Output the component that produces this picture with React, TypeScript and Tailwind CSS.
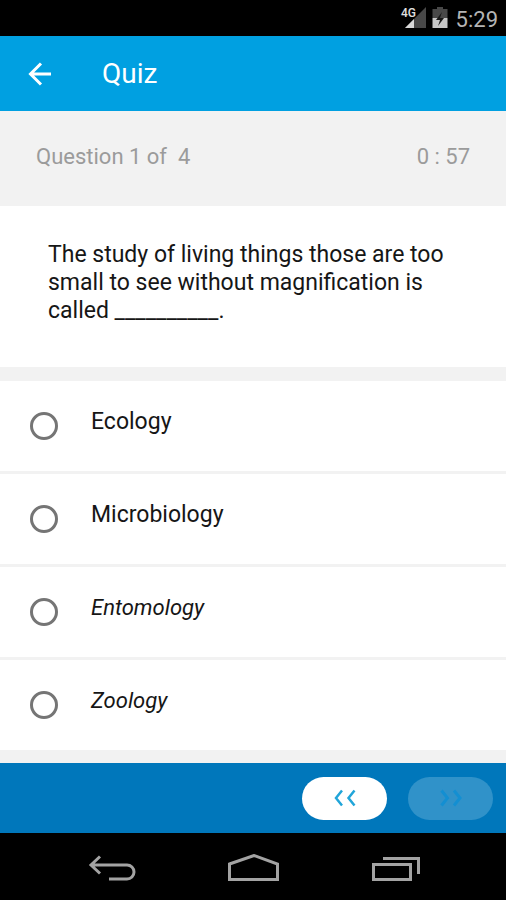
import clsx from 'clsx';
import * as React from 'react';

interface IOption {
  id: string;
  label: string;
  italic?: boolean;
}

const options: IOption[] = [
  { id: 'ecology', label: 'Ecology' },
  { id: 'microbiology', label: 'Microbiology' },
  { id: 'entomology', label: 'Entomology', italic: true },
  { id: 'zoology', label: 'Zoology', italic: true },
];

const StatusBar: React.FunctionComponent = () => (
  <div className="flex h-9 items-center justify-end bg-black pr-2 text-[#b4b4b4]">
    <svg width="26" height="24" viewBox="0 0 26 24" className="mr-1.5" aria-hidden="true">
      <path d="M26 1v21H5z" fill="#484848" />
      <path d="M14 13v9H5z" fill="#d8d8d8" />
      <text x="1" y="11" fontSize="12" fontWeight="500" fill="#e0e0e0" className="font-['Roboto',sans-serif]">
        4G
      </text>
    </svg>
    <svg width="16" height="24" viewBox="0 0 16 24" className="mr-2" aria-hidden="true">
      <path d="M5 1h6v2h4.500v9H.5V3H5z" fill="#484848" />
      <path d="M.5 12h15v10H.5z" fill="#c6c6c6" />
      <path d="M10 6 4 14h4l-2 6 6-8H8z" fill="#181818" />
    </svg>
    <span className="pt-1 text-[22px] leading-6">5:29</span>
  </div>
);

const AppBar: React.FunctionComponent = () => (
  <header className="flex h-[75px] items-center bg-[#00a0e1] pl-7 text-white">
    <button type="button" aria-label="Back" className="mr-[50px]">
      <svg width="24" height="24" viewBox="0 0 24 24" fill="none" stroke="currentColor" strokeWidth="3">
        <path d="M23 12H3M13 1.500 2.500 12 13 22.500" />
      </svg>
    </button>
    <h1 className="text-[28px] leading-8">Quiz</h1>
  </header>
);

const Option: React.FunctionComponent<IOption> = ({ id, label, italic }) => (
  <label htmlFor={id} className="flex h-[90px] items-start bg-white pl-[30px]">
    <input
      id={id}
      type="radio"
      name="answer"
      className="mt-[31px] mr-[33px] size-7 shrink-0 appearance-none rounded-full border-3 border-[#757575] checked:bg-[#00a0e1]"
    />
    <span className={clsx('mt-[27px] leading-7', italic ? 'text-[22px] italic' : 'text-[23px]')}>{label}</span>
  </label>
);

const Footer: React.FunctionComponent = () => (
  <footer className="flex h-[70px] items-center justify-end gap-[21px] bg-[#0077bb] pr-[13px] text-[#21a5d9]">
    <button
      type="button"
      aria-label="Previous question"
      className="flex h-[43px] w-[85px] items-center justify-center rounded-full bg-white"
    >
      <svg width="22" height="18" viewBox="0 0 22 18" fill="none" stroke="currentColor" strokeWidth="2.500">
        <path d="M8 1.500 2 9l6 7.500M20.500 1.500l-6 7.500 6 7.500" />
      </svg>
    </button>
    <button
      type="button"
      aria-label="Next question"
      disabled
      className="flex h-[43px] w-[85px] items-center justify-center rounded-full bg-[#3092c9] text-[#138fd2]"
    >
      <svg width="22" height="18" viewBox="0 0 22 18" fill="none" stroke="currentColor" strokeWidth="3">
        <path d="m1.500 1.500 6 7.500-6 7.500M14 1.500 20 9l-6 7.500" />
      </svg>
    </button>
  </footer>
);

const NavBar: React.FunctionComponent = () => (
  <nav className="grid h-[67px] grid-cols-3 items-center bg-black px-[42px] pt-1 text-[#a3a3a3]">
    <button type="button" aria-label="System back" className="flex justify-center">
      <svg width="48" height="30" viewBox="0 0 48 30" fill="none" stroke="currentColor" strokeWidth="3">
        <path d="M3 11h36a7 7 0 0 1 0 14H21M12 2.500 3 11l9 8.500" />
      </svg>
    </button>
    <button type="button" aria-label="Home" className="flex justify-center">
      <svg width="54" height="30" viewBox="0 0 54 30" fill="none" stroke="currentColor" strokeWidth="3">
        <path d="M3.500 10 28 1.500 51.500 10v15.500h-48z" />
      </svg>
    </button>
    <button type="button" aria-label="Recent apps" className="flex justify-center">
      <svg width="52" height="30" viewBox="0 0 52 30" fill="none" stroke="currentColor" strokeWidth="3">
        <path d="M5.500 10.500h37v15h-37zM15 4.500h35.500V20" />
      </svg>
    </button>
  </nav>
);

const App: React.FunctionComponent = () => (
  <div className="flex min-h-screen flex-col bg-[#f2f2f2] font-['Roboto','Noto_Sans',sans-serif] text-[#161616]">
    <StatusBar />
    <AppBar />

    <main className="flex-1">
      <div className="flex h-[95px] items-center justify-between px-9 pb-1 text-[22px] leading-7 text-[#9b9b9b]">
        <span className="whitespace-pre">Question 1 of  4</span>
        <span>0 : 57</span>
      </div>

      <p className="mb-3.5 bg-white px-12 pt-[35px] pb-[42px] text-[23px] leading-7">
        The study of living things those are too small to see without magnification is called __________.
      </p>

      <div role="radiogroup" aria-label="Answers" className="flex flex-col gap-[3px]">
        {options.map(option => (
          <Option key={option.id} {...option} />
        ))}
      </div>
    </main>

    <Footer />
    <NavBar />
  </div>
);

export default App;
